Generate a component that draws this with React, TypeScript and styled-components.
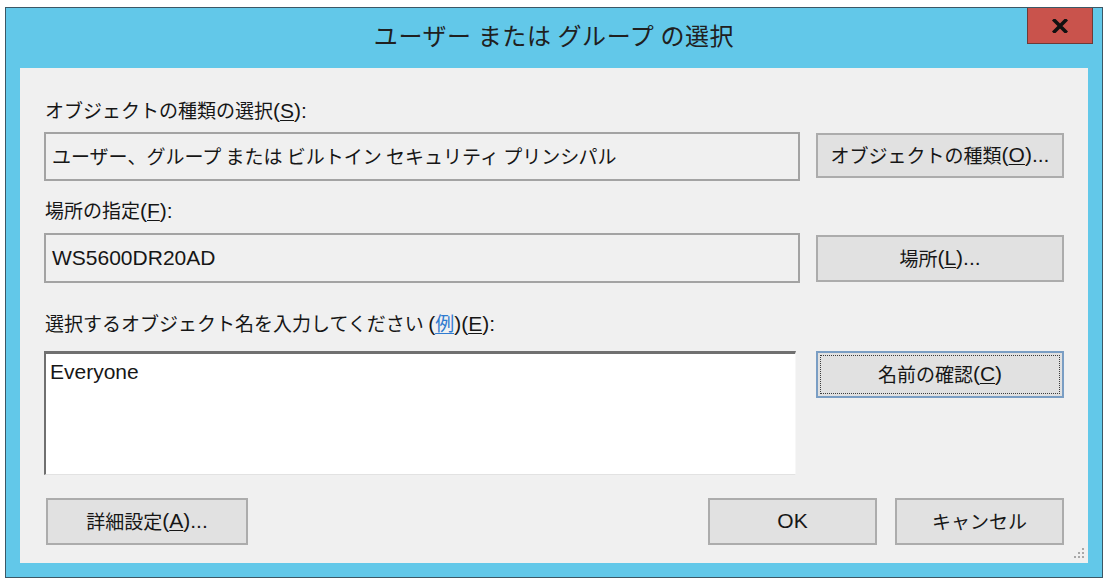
import React from 'react';
import styled, { createGlobalStyle } from 'styled-components';

const GlobalStyle = createGlobalStyle`
  html, body {
    margin: 0;
    padding: 0;
    background: #ffffff;
  }
  body {
    font-family: "Noto Sans CJK JP", "Noto Sans", sans-serif;
    color: #161616;
  }
`;

const Window = styled.div`
  box-sizing: border-box;
  margin: 7px 0 0 5px;
  width: 1098px;
  height: 571px;
  border: 1px solid #3c5866;
  background: #62c8e9;
  display: flex;
  flex-direction: column;
  padding: 0 14px 14px 14px;
  position: relative;
`;

const TitleBar = styled.div`
  height: 60px;
  flex: none;
  display: flex;
  justify-content: center;
  align-items: flex-start;
`;

const Title = styled.div`
  margin-top: 10px;
  font-size: 24px;
  line-height: 34px;
  color: #202020;
  letter-spacing: 0.6px;
`;

const CloseButton = styled.button`
  position: absolute;
  top: 0;
  right: 9px;
  width: 66px;
  height: 36px;
  box-sizing: border-box;
  padding: 0;
  border: 1px solid #6c3b38;
  border-top: none;
  background: #c9534c;
  display: flex;
  align-items: center;
  justify-content: center;
`;

const Client = styled.div`
  flex: 1;
  position: relative;
  background: #f0f0f0;
  padding: 0 24px 18px 24px;
  display: flex;
  flex-direction: column;
`;

const Label = styled.div<{ $top: number; $gap: number }>`
  height: 28px;
  margin-top: ${(p) => p.$top}px;
  margin-bottom: ${(p) => p.$gap}px;
  padding-left: 1px;
  font-size: 19px;
  line-height: 28px;
  white-space: nowrap;
`;

/* Latin runs sit a little larger than the kana/kanji, as in the system UI font */
const Latin = styled.span`
  font-family: "Liberation Sans", Arial, sans-serif;
  font-size: 21px;
  line-height: 1;
`;

const U = styled.span`
  text-decoration: underline;
  text-underline-offset: 2px;
  text-decoration-thickness: 1px;
`;

const Link = styled.span`
  font-family: "Noto Sans CJK JP", sans-serif;
  font-size: 19px;
  line-height: 1;
  color: #2f7bd0;
  text-decoration: underline;
  text-underline-offset: 2px;
`;

const Row = styled.div`
  display: flex;
  justify-content: space-between;
  align-items: flex-start;
`;

const ReadOnlyField = styled.div<{ $h: number }>`
  box-sizing: border-box;
  width: 756px;
  height: ${(p) => p.$h}px;
  border: 2px solid #a3a3a3;
  background: #f0f0f0;
  padding: 0 6px 2px;
  display: flex;
  align-items: center;
  font-size: 19px;
  line-height: 28px;
  white-space: nowrap;
`;

const NameInput = styled.div`
  box-sizing: border-box;
  width: 752px;
  height: 124px;
  background: #ffffff;
  border-top: 3px solid #707070;
  border-left: 2px solid #707070;
  border-right: 1px solid #f7f7f7;
  border-bottom: 1px solid #e2e2e2;
  padding: 3px 4px;
  font-size: 19px;
  line-height: 28px;
`;

const Button = styled.button<{ $w?: number; $h: number; $mt?: number; $ml?: number; $default?: boolean }>`
  box-sizing: border-box;
  width: ${(p) => p.$w ?? 248}px;
  height: ${(p) => p.$h}px;
  margin-top: ${(p) => p.$mt ?? 0}px;
  margin-left: ${(p) => p.$ml ?? 0}px;
  padding: 0 4px 2px;
  background: #e1e1e1;
  border: 2px solid ${(p) => (p.$default ? '#7a9ec4' : '#acacac')};
  outline: ${(p) => (p.$default ? '1px dotted #3d3d3d' : 'none')};
  outline-offset: -5px;
  font-family: "Noto Sans CJK JP", "Noto Sans", sans-serif;
  font-size: 19px;
  line-height: 28px;
  color: #161616;
  white-space: nowrap;
  display: flex;
  align-items: center;
  justify-content: center;
`;

const Footer = styled.div`
  margin-top: 23px;
  display: flex;
  align-items: center;
`;

const Spacer = styled.div`
  flex: 1;
`;

const FooterButtons = styled.div`
  display: flex;
  gap: 18px;
`;

const Grip = styled.svg`
  position: absolute;
  right: 3px;
  bottom: 3px;
`;

export default function App() {
  return (
    <>
      <GlobalStyle />
      <Window>
        <TitleBar>
          <Title>ユーザー または グループ の選択</Title>
        </TitleBar>
        <CloseButton aria-label="閉じる">
          <svg width="16" height="14" viewBox="0 0 16 14">
            <path d="M2.5 1.5 L13.5 12.5 M13.5 1.5 L2.5 12.5" stroke="#111" strokeWidth="3.6" strokeLinecap="square" />
          </svg>
        </CloseButton>
        <Client>
          <Label $top={28} $gap={8}>
            オブジェクトの種類の選択<Latin>(<U>S</U>):</Latin>
          </Label>
          <Row>
            <ReadOnlyField $h={49}>ユーザー、グループ または ビルトイン セキュリティ プリンシパル</ReadOnlyField>
            <Button $h={45} $mt={1}>
              オブジェクトの種類<Latin>(<U>O</U>)...</Latin>
            </Button>
          </Row>

          <Label $top={15} $gap={9}>
            場所の指定<Latin>(<U>F</U>):</Latin>
          </Label>
          <Row>
            <ReadOnlyField $h={50}>
              <Latin>WS5600DR20AD</Latin>
            </ReadOnlyField>
            <Button $h={47} $mt={2}>
              場所<Latin>(<U>L</U>)...</Latin>
            </Button>
          </Row>

          <Label $top={26} $gap={14}>
            選択するオブジェクト名を入力してください{' '}
            <Latin>
              (<Link>例</Link>)(<U>E</U>):
            </Latin>
          </Label>
          <Row>
            <NameInput>
              <Latin>Everyone</Latin>
            </NameInput>
            <Button $h={47} $default>
              名前の確認<Latin>(<U>C</U>)</Latin>
            </Button>
          </Row>

          <Footer>
            <Button $w={202} $h={47} $ml={2}>
              詳細設定<Latin>(<U>A</U>)...</Latin>
            </Button>
            <Spacer />
            <FooterButtons>
              <Button $w={169} $h={47}>
                <Latin>OK</Latin>
              </Button>
              <Button $w={169} $h={47}>
                キャンセル
              </Button>
            </FooterButtons>
          </Footer>

          <Grip width="14" height="14" viewBox="0 0 14 14">
            <g fill="#a8a8a8">
              <rect x="11" y="2" width="2" height="2" />
              <rect x="7" y="6" width="2" height="2" />
              <rect x="11" y="6" width="2" height="2" />
              <rect x="3" y="10" width="2" height="2" />
              <rect x="7" y="10" width="2" height="2" />
              <rect x="11" y="10" width="2" height="2" />
            </g>
          </Grip>
        </Client>
      </Window>
    </>
  );
}
